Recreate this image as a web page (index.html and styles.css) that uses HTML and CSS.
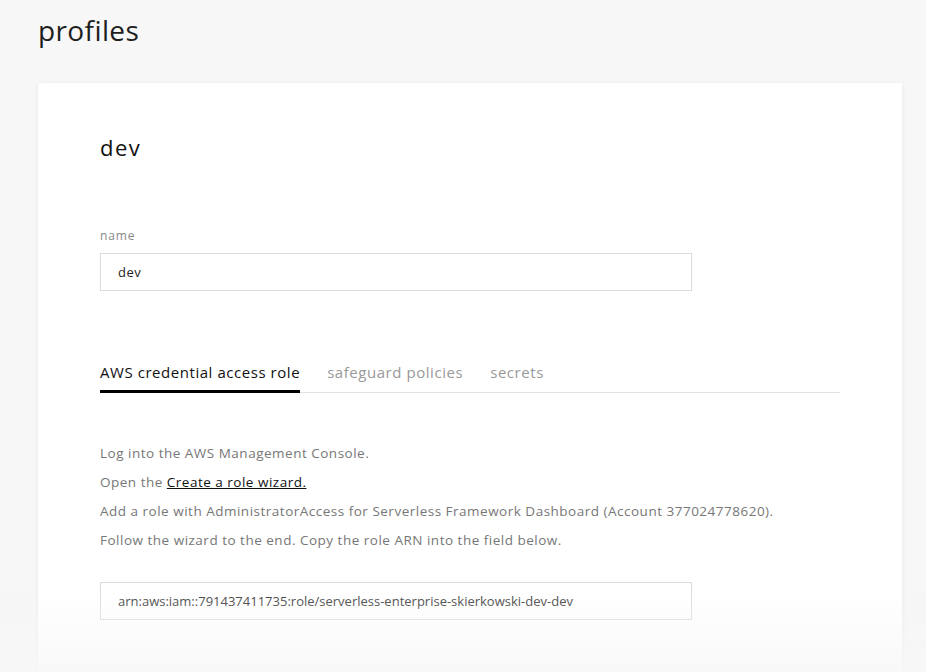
FILE: index.html
```html
<!DOCTYPE html>
<html lang="en">
<head>
<meta charset="utf-8">
<title>profiles</title>
<link rel="stylesheet" href="styles.css">
</head>
<body>
<div class="page">
  <h1 class="page-title">profiles</h1>
  <section class="card">
    <h2 class="card-title">dev</h2>
    <div class="field">
      <label class="field-label">name</label>
      <div class="input">dev</div>
    </div>
    <nav class="tabs">
      <span class="tab active">AWS credential access role</span>
      <span class="tab">safeguard policies</span>
      <span class="tab">secrets</span>
    </nav>
    <div class="steps">
      <p>Log into the AWS Management Console.</p>
      <p>Open the <a href="#">Create a role wizard.</a></p>
      <p>Add a role with AdministratorAccess for Serverless Framework Dashboard (Account 377024778620).</p>
      <p>Follow the wizard to the end. Copy the role ARN into the field below.</p>
    </div>
    <div class="input arn">arn:aws:iam::791437411735:role/serverless-enterprise-skierkowski-dev-dev</div>
  </section>
</div>
<div class="fade"></div>
</body>
</html>
```

FILE: styles.css
```css
html, body {
  margin: 0;
  padding: 0;
  height: 100%;
  overflow: hidden;
}
body {
  background: #f7f7f7;
  font-family: "Open Sans", Lato, sans-serif;
  color: #222;
}
.page {
  padding: 0 24px 0 38px;
}
.page-title {
  margin: 0;
  padding-top: 12px;
  font-size: 28px;
  font-weight: 400;
  letter-spacing: 0.4px;
  line-height: 36px;
  color: #1e1e1e;
  height: 71px;
}
.card {
  background: #fff;
  box-shadow: 0 1px 5px rgba(0, 0, 0, 0.07);
  padding: 48px 62px 80px 62px;
  min-height: 700px;
}
.card-title {
  margin: 0;
  font-size: 22px;
  font-weight: 400;
  letter-spacing: 1.5px;
  line-height: 32px;
  color: #111;
}
.field {
  margin-top: 65px;
  width: 592px;
}
.field-label {
  display: block;
  font-size: 12px;
  letter-spacing: 0.9px;
  line-height: 16px;
  color: #888;
  margin-bottom: 9px;
}
.input {
  box-sizing: border-box;
  height: 38px;
  border: 1px solid #dcdcdc;
  background: #fff;
  padding: 0 17px;
  font-size: 13px;
  letter-spacing: 0.5px;
  line-height: 36px;
  color: #222;
  width: 592px;
}
.tabs {
  margin-top: 71px;
  display: flex;
  gap: 27px;
  border-bottom: 1px solid #e2e2e2;
  width: 740px;
}
.tab {
  font-size: 15px;
  letter-spacing: 0.55px;
  line-height: 20px;
  padding-bottom: 10px;
  color: #999;
  margin-bottom: -1px;
}
.tab.active {
  color: #111;
  border-bottom: 3px solid #000;
  padding-bottom: 8px;
}
.steps {
  margin-top: 46px;
}
.steps p {
  margin: 0;
  font-size: 13.5px;
  letter-spacing: 0.5px;
  line-height: 29px;
  color: #777;
}
.steps a {
  color: #111;
  text-decoration: underline;
}
.arn {
  margin-top: 27px;
  letter-spacing: 0;
  color: #444;
}
.fade {
  position: fixed;
  left: 0;
  right: 0;
  bottom: 0;
  height: 80px;
  background: linear-gradient(to bottom, rgba(247, 247, 247, 0), rgba(247, 247, 247, 0.85));
  pointer-events: none;
}
```
